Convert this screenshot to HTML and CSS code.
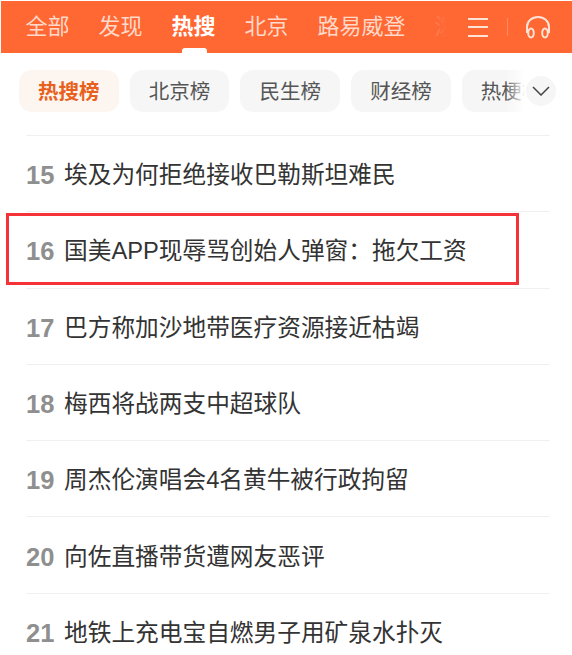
FILE: index.html
```html
<!DOCTYPE html>
<html lang="en">

<head>
    <meta charset="UTF-8">
    <title>热搜</title>
    <link rel="stylesheet" href="styles.css">
</head>

<body>
    <div class="header">
        <div class="tabs">
            <span class="tab">全部</span>
            <span class="tab">发现</span>
            <span class="tab current">热搜</span>
            <span class="tab">北京</span>
            <span class="tab">路易威登</span>
            <span class="tab">泼</span>
            <div class="tabs-fade"></div>
        </div>
        <div class="header-icons">
            <svg class="icon-menu" width="22" height="20" viewBox="0 0 22 20">
                <path d="M1 2h20M1 10h20M1 19h20" stroke="#ffe3d6" stroke-width="2" fill="none" />
            </svg>
            <i class="divider"></i>
            <svg class="icon-phones" width="26" height="24" viewBox="0 0 26 24">
                <path d="M2 18V12C2 6 7 2 13 2s11 4 11 10v6" stroke="#ffe3d6" stroke-width="2" fill="none" />
                <ellipse cx="6" cy="18" rx="2.800" ry="4.500" stroke="#ffe3d6" stroke-width="2" fill="none" />
                <ellipse cx="20" cy="18" rx="2.800" ry="4.500" stroke="#ffe3d6" stroke-width="2" fill="none" />
            </svg>
        </div>
    </div>

    <div class="chips">
        <span class="chip current">热搜榜</span>
        <span class="chip">北京榜</span>
        <span class="chip">民生榜</span>
        <span class="chip">财经榜</span>
        <span class="chip">热梗榜</span>
        <div class="chips-more">
            <span class="more-btn">
                <svg width="18" height="10" viewBox="0 0 18 10">
                    <path d="M1 1l8 8 8-8" stroke="#444" stroke-width="1.500" fill="none" />
                </svg>
            </span>
        </div>
    </div>

    <ul class="list">
        <li><b>15</b><span>埃及为何拒绝接收巴勒斯坦难民</span></li>
        <li><b>16</b><span>国美APP现辱骂创始人弹窗：拖欠工资</span></li>
        <li><b>17</b><span>巴方称加沙地带医疗资源接近枯竭</span></li>
        <li><b>18</b><span>梅西将战两支中超球队</span></li>
        <li><b>19</b><span>周杰伦演唱会4名黄牛被行政拘留</span></li>
        <li><b>20</b><span>向佐直播带货遭网友恶评</span></li>
        <li><b>21</b><span>地铁上充电宝自燃男子用矿泉水扑灭</span></li>
    </ul>

    <div class="mark"></div>
</body>

</html>
```

FILE: styles.css
```css
* {
    padding: 0;
    margin: 0;
    box-sizing: border-box;
}

html,
body {
    height: 100%;
    overflow: hidden;
}

body {
    position: relative;
    background-color: #fff;
    font-family: "Liberation Sans", "Noto Sans CJK SC", sans-serif;
}

.header {
    display: flex;
    justify-content: space-between;
    height: 52px;
    margin: 1px 0 0 1px;
    background-color: #ff6733;
}

.tabs {
    display: flex;
    gap: 29px;
    position: relative;
    width: 460px;
    padding-left: 24.500px;
    overflow: hidden;
}

.tab {
    flex: none;
    height: 52px;
    font-size: 22px;
    line-height: 51px;
    color: #ffd9c9;
}

.tab.current {
    position: relative;
    font-weight: bold;
    color: #fff;
}

.tab.current::after {
    content: "";
    position: absolute;
    left: 10px;
    bottom: 0;
    width: 25px;
    height: 5px;
    border-radius: 3px 3px 0 0;
    background-color: #fff;
}

.tabs-fade {
    position: absolute;
    top: 0;
    right: 0;
    width: 30px;
    height: 100%;
    background: linear-gradient(to right, rgba(255, 103, 51, .7), #ff6733 55%);
}

.header-icons {
    display: flex;
    align-items: center;
    padding-right: 21px;
}

.icon-menu {
    margin-left: 6px;
}

.divider {
    width: 1px;
    height: 18px;
    margin: 0 17px 0 18px;
    background-color: #ff8a60;
}

.chips {
    display: flex;
    gap: 11px;
    position: relative;
    height: 42px;
    margin-top: 17px;
    padding-left: 19px;
    overflow: hidden;
}

.chip {
    flex: none;
    width: 99.700px;
    border-radius: 13px;
    font-size: 20.500px;
    line-height: 43px;
    text-align: center;
    color: #555;
    background-color: #f6f6f6;
}

.chip.current {
    font-weight: bold;
    color: #e8601c;
    background-color: #fdf5f0;
}

.chips-more {
    display: flex;
    align-items: center;
    position: absolute;
    top: 0;
    right: 0;
    width: 74px;
    height: 100%;
    background: linear-gradient(to right, rgba(255, 255, 255, 0) 10%, #fff 37%);
}

.more-btn {
    display: flex;
    align-items: center;
    justify-content: center;
    width: 30px;
    height: 30px;
    margin-left: 28px;
    border-radius: 50%;
    background-color: #f6f6f6;
}

.list {
    list-style: none;
    margin: 23px 22px 0 26px;
}

.list li {
    display: flex;
    align-items: center;
    gap: 11px;
    height: 76.300px;
    border-top: 1px solid #f0f0f0;
    white-space: nowrap;
}

.list b {
    width: 27px;
    margin-top: 4px;
    font-size: 25.500px;
    color: #8f8f8f;
}

.list span {
    margin-bottom: 1px;
    font-size: 23.700px;
    color: #333;
}

.mark {
    position: absolute;
    left: 6px;
    top: 213px;
    width: 513px;
    height: 72px;
    border: 3px solid #f53237;
}
```
